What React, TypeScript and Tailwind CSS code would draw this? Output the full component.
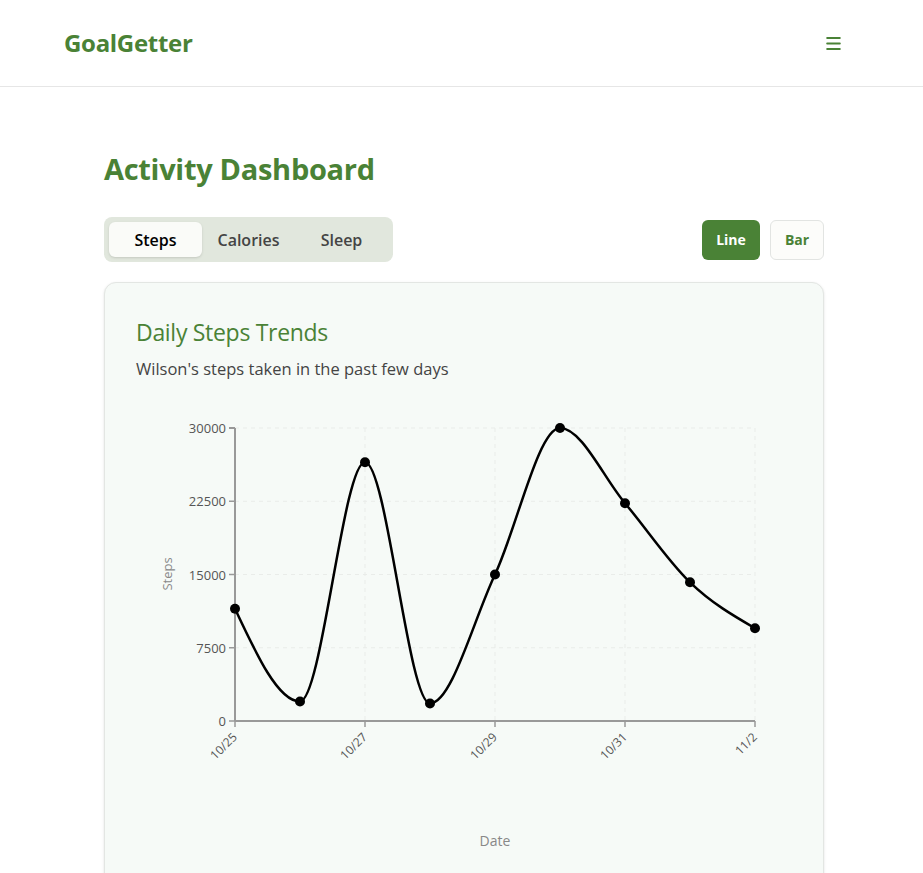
import { Menu } from "lucide-react"

const data = [
  { date: "10/25", steps: 11500 },
  { date: "10/26", steps: 2000 },
  { date: "10/27", steps: 26500 },
  { date: "10/28", steps: 1800 },
  { date: "10/29", steps: 15000 },
  { date: "10/30", steps: 30000 },
  { date: "10/31", steps: 22300 },
  { date: "11/1", steps: 14200 },
  { date: "11/2", steps: 9500 },
]

// chart geometry inside the svg
const X0 = 99
const STEP = 65
const Y0 = 320
const YTOP = 27
const MAX = 30000

const px = (i: number) => X0 + i * STEP
const py = (v: number) => Y0 - (v / MAX) * (Y0 - YTOP)

function monotonePath(pts: [number, number][]) {
  const n = pts.length
  const sign = (v: number) => (v < 0 ? -1 : 1)
  const t: number[] = new Array(n).fill(0)
  for (let i = 1; i < n - 1; i++) {
    const [x0, y0] = pts[i - 1]
    const [x1, y1] = pts[i]
    const [x2, y2] = pts[i + 1]
    const h0 = x1 - x0
    const h1 = x2 - x1
    const s0 = (y1 - y0) / h0
    const s1 = (y2 - y1) / h1
    const p = (s0 * h1 + s1 * h0) / (h0 + h1)
    t[i] =
      (sign(s0) + sign(s1)) *
        Math.min(Math.abs(s0), Math.abs(s1), 0.5 * Math.abs(p)) || 0
  }
  const end = (a: [number, number], b: [number, number], tt: number) =>
    (3 * (b[1] - a[1])) / (b[0] - a[0]) / 2 - tt / 2
  t[0] = end(pts[0], pts[1], t[1])
  t[n - 1] = end(pts[n - 2], pts[n - 1], t[n - 2])
  let d = `M${pts[0][0]},${pts[0][1]}`
  for (let i = 0; i < n - 1; i++) {
    const [x0, y0] = pts[i]
    const [x1, y1] = pts[i + 1]
    const dx = (x1 - x0) / 3
    d += `C${x0 + dx},${y0 + dx * t[i]},${x1 - dx},${y1 - dx * t[i + 1]},${x1},${y1}`
  }
  return d
}

function StepsChart() {
  const pts = data.map((d, i) => [px(i), py(d.steps)] as [number, number])
  const yTicks = [0, 7500, 15000, 22500, 30000]
  const xTicks = [0, 2, 4, 6, 8]

  return (
    <svg width="656" height="470" className="block text-[13px]">
      {/* grid */}
      {yTicks.map((v) => (
        <line
          key={v}
          x1={X0}
          x2={X0 + 8 * STEP}
          y1={py(v)}
          y2={py(v)}
          stroke="#e9ece9"
          strokeDasharray="4 4"
        />
      ))}
      {xTicks.map((i) => (
        <line
          key={i}
          x1={px(i)}
          x2={px(i)}
          y1={YTOP}
          y2={Y0}
          stroke="#e9ece9"
          strokeDasharray="4 4"
        />
      ))}

      {/* axes */}
      <line x1={X0} x2={X0} y1={YTOP} y2={Y0} stroke="#999" strokeWidth="2" />
      <line x1={X0} x2={X0 + 8 * STEP} y1={Y0} y2={Y0} stroke="#999" strokeWidth="2" />
      <line x1={X0 - 6} x2={X0} y1={YTOP} y2={YTOP} stroke="#999" strokeWidth="2" />

      {yTicks.map((v) => (
        <g key={v}>
          <line x1={X0 - 6} x2={X0} y1={py(v)} y2={py(v)} stroke="#999" strokeWidth="1.5" />
          <text x={X0 - 9} y={py(v)} dy="5" textAnchor="end" fill="#555">
            {v}
          </text>
        </g>
      ))}
      {xTicks.map((i) => (
        <g key={i}>
          <line x1={px(i)} x2={px(i)} y1={Y0} y2={Y0 + 6} stroke="#999" strokeWidth="1.5" />
          <text
            x={px(i)}
            y={Y0 + 14}
            textAnchor="end"
            fill="#555"
            fontSize="12"
            transform={`rotate(-45 ${px(i)} ${Y0 + 14})`}
            dy="4"
          >
            {data[i].date}
          </text>
        </g>
      ))}

      <text
        x="36"
        y="173"
        textAnchor="middle"
        fill="#888"
        fontSize="13"
        transform="rotate(-90 36 173)"
      >
        Steps
      </text>
      <text x="359" y="445" textAnchor="middle" fill="#888" fontSize="14">
        Date
      </text>

      <path d={monotonePath(pts)} fill="none" stroke="#000" strokeWidth="2.5" />
      {pts.map(([x, y], i) => (
        <circle key={i} cx={x} cy={y} r="5" fill="#000" />
      ))}
    </svg>
  )
}

export default function App() {
  return (
    <div className="min-h-screen bg-white font-['Open_Sans',sans-serif] text-[#333]">
      <header className="flex h-[87px] items-center justify-between border-b border-[#e6e6e6] pl-16 pr-[80px]">
        <div className="text-[24px] font-bold tracking-[-0.3px] text-[#4a8236]">GoalGetter</div>
        <button type="button" className="grid size-5 place-items-center text-[#4a8236]">
          <Menu size={19} strokeWidth={2.4} />
        </button>
      </header>

      <main className="ml-[104px] w-[720px] pt-16 pb-10">
        <h1 className="text-[29px] leading-9 font-bold tracking-[-0.3px] text-[#4a8236]">
          Activity Dashboard
        </h1>

        <div className="mt-[30px] flex items-center justify-between">
          <div className="flex rounded-lg bg-[#e1e7dd] p-[5px]">
            <button className="h-[35px] w-[93px] rounded-md bg-[#fafbf8] text-[16px] font-semibold text-black shadow-sm">
              Steps
            </button>
            <button className="h-[35px] w-[93px] rounded-md text-[16px] font-semibold text-[#444]">
              Calories
            </button>
            <button className="h-[35px] w-[93px] rounded-md text-[16px] font-semibold text-[#444]">
              Sleep
            </button>
          </div>
          <div className="flex gap-2.5">
            <button className="h-10 w-[58px] rounded-md bg-[#4a8236] text-[14px] font-bold text-white">
              Line
            </button>
            <button className="h-10 w-[54px] rounded-md border border-[#e2e4e2] bg-[#fcfcfa] text-[14px] font-bold text-[#4a8236]">
              Bar
            </button>
          </div>
        </div>

        <section className="mt-5 rounded-xl border border-[#e3e6e3] bg-[#f6faf7] pl-[31px] pr-8 pt-[33px] pb-6 shadow-sm">
          <h2 className="text-[23px] leading-8 font-medium tracking-[-0.3px] text-[#4a8236]">
            Daily Steps Trends
          </h2>
          <p className="mt-[9px] text-[16.5px] leading-6 text-[#444]">
            Wilson's steps taken in the past few days
          </p>
          <div className="mt-[20px]">
            <StepsChart />
          </div>
        </section>
      </main>
    </div>
  )
}
